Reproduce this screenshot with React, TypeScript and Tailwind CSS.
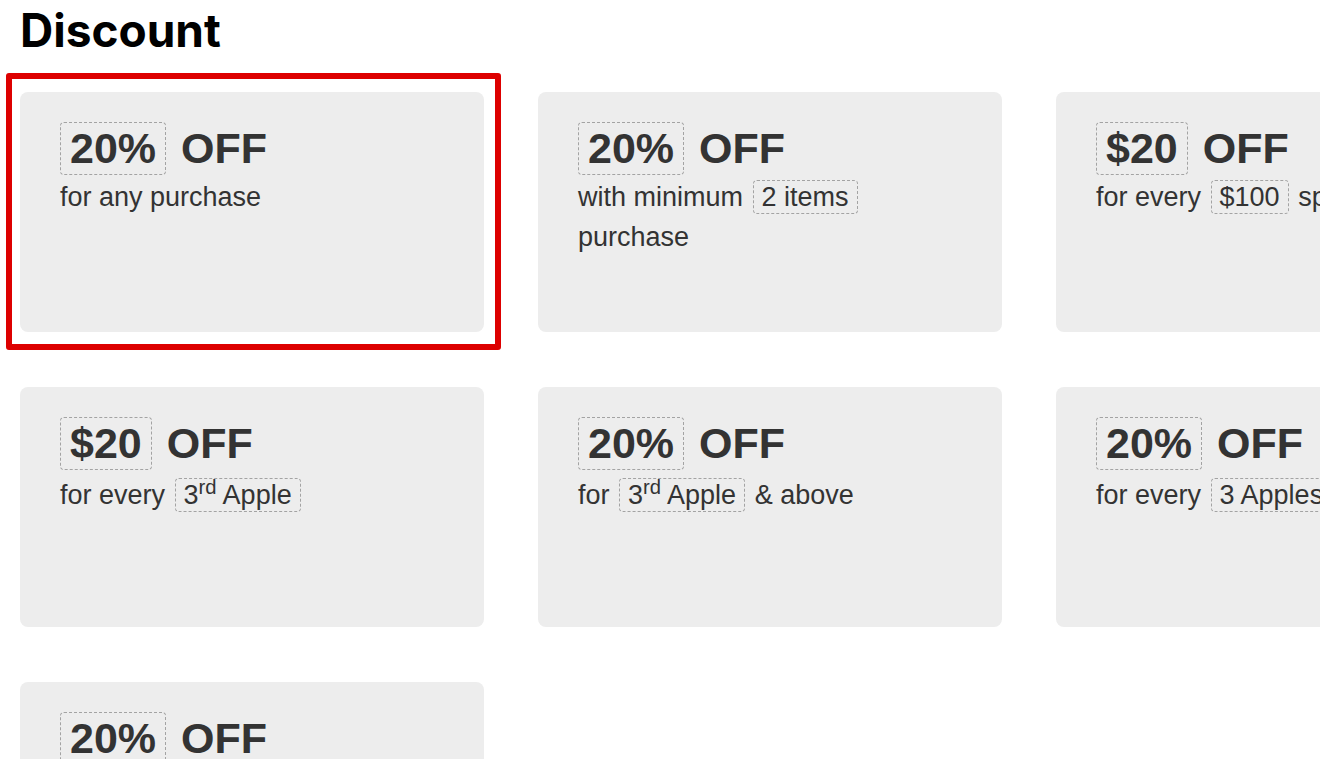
import { ReactNode } from "react";

type Deal = {
  amount: string;
  desc: ReactNode;
  selected?: boolean;
  raised?: boolean;
};

function Tag({ children }: { children: ReactNode }) {
  return (
    <span className="mx-[2px] rounded-[4px] border border-dashed border-[#a3a3a3] px-[8px] py-[1px]">
      {children}
    </span>
  );
}

const deals: Deal[] = [
  { amount: "20%", desc: <>for any purchase</>, selected: true },
  {
    amount: "20%",
    desc: (
      <>
        with minimum <Tag>2 items</Tag> purchase
      </>
    ),
  },
  {
    amount: "$20",
    desc: (
      <>
        for every <Tag>$100</Tag> spent
      </>
    ),
  },
  {
    amount: "$20",
    raised: true,
    desc: (
      <>
        for every <Tag>3<sup>rd</sup> Apple</Tag>
      </>
    ),
  },
  {
    amount: "20%",
    raised: true,
    desc: (
      <>
        for <Tag>3<sup>rd</sup> Apple</Tag> &amp; above
      </>
    ),
  },
  {
    amount: "20%",
    raised: true,
    desc: (
      <>
        for every <Tag>3 Apples</Tag>
      </>
    ),
  },
  { amount: "20%", desc: <>for any purchase</> },
];

function DealCard({ deal }: { deal: Deal }) {
  return (
    <div className="relative">
      {deal.selected && (
        <div className="absolute -left-[14px] -top-[19px] -right-[17px] -bottom-[18px] rounded-[3px] border-[6px] border-[#dd0000]" />
      )}
      <div className="relative h-[240px] rounded-[8px] bg-[#ededed] px-[40px] pt-[30px] text-[#333333]">
        <div className="flex items-center gap-[15px] text-[43px] font-bold">
          <span className="rounded-[4px] border border-dashed border-[#a3a3a3] px-[9px] leading-[51px]">
            {deal.amount}
          </span>
          <span className="leading-[51px]">OFF</span>
        </div>
        <p className={deal.raised ? "mt-[5px] text-[27px] leading-[40px]" : "mt-[2px] text-[27px] leading-[40px]"}>
          {deal.desc}
        </p>
      </div>
    </div>
  );
}

export default function App() {
  return (
    <div className="h-screen w-screen overflow-hidden bg-white px-[20px] font-['Liberation_Sans',Arial,sans-serif]">
      <h1 className="mt-[7px] font-['Inter',sans-serif] text-[46px] font-bold leading-none text-black">
        Discount
      </h1>
      <div className="mt-[39px] grid grid-cols-[repeat(3,464px)] gap-x-[54px] gap-y-[55px]">
        {deals.map((d, i) => (
          <DealCard key={i} deal={d} />
        ))}
      </div>
    </div>
  );
}
